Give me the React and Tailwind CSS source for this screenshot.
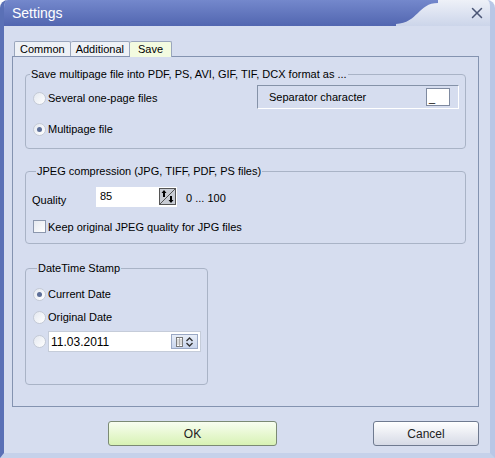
import { X } from "lucide-react";

const font = { fontFamily: '"Liberation Sans", Arial, sans-serif' };

function Radio({ checked }) {
  return (
    <span className="w-[13px] h-[13px] rounded-full border border-[#c4cad6] bg-gradient-to-br from-[#e4e8f0] to-[#ffffff] flex items-center justify-center shrink-0">
      {checked && <span className="w-[5px] h-[5px] rounded-full bg-[#5d6f99]" />}
    </span>
  );
}

function Group({ title, className, children }) {
  return (
    <fieldset className={"border border-[#a9b3c6] rounded-[4px] " + className}>
      <legend className="ml-[4px] px-[1px] text-[11px] leading-[14px] text-black">{title}</legend>
      {children}
    </fieldset>
  );
}

export default function App() {
  return (
    <div
      className="w-[495px] h-[458px] bg-[#d6ddef] rounded-t-[8px] overflow-hidden flex flex-col border-l-[4px] border-l-[#5a70b6] border-r-[5px] border-r-[#b9c7e6] border-b-[5px] border-b-[#c5d1ea] text-[11px] text-black"
      style={font}
    >
      {/* title bar */}
      <div className="h-[26px] flex shrink-0">
        <div className="flex-1 bg-gradient-to-b from-[#7488cc] to-[#5266b0] flex items-center pl-[8px]">
          <span className="text-white text-[14px]">Settings</span>
        </div>
        <svg width="42" height="26" viewBox="0 0 42 26" className="shrink-0">
          <defs>
            <linearGradient id="lt" x1="0" y1="0" x2="0" y2="1">
              <stop offset="0" stopColor="#eef1f8" />
              <stop offset="1" stopColor="#ccd5ea" />
            </linearGradient>
            <linearGradient id="dk" x1="0" y1="0" x2="0" y2="1">
              <stop offset="0" stopColor="#7488cc" />
              <stop offset="1" stopColor="#5266b0" />
            </linearGradient>
          </defs>
          <rect width="42" height="26" fill="url(#lt)" />
          <path d="M0 0 H42 V3 C22 3 22 23 0 24 V26 H0 Z" fill="url(#dk)" />
        </svg>
        <div className="w-[52px] bg-gradient-to-b from-[#eef1f8] to-[#ccd5ea] flex items-center justify-end pr-[4px]">
          <X size={18} strokeWidth={2} className="text-[#4a5575]" />
        </div>
      </div>

      {/* body */}
      <div className="flex-1 pl-[8px] pr-[11px] pt-[14px] flex flex-col">
        <div className="flex h-[16px] items-end pl-[2px]">
          <div className="h-[15px] px-[5px] border border-b-0 border-[#9aa6bc] bg-[#eef1f6] leading-[14px] rounded-t-[2px]">Common</div>
          <div className="h-[15px] px-[5px] border border-b-0 border-l-0 border-[#9aa6bc] bg-[#eef1f6] leading-[14px] rounded-t-[2px]">Additional</div>
          <div className="h-[16px] px-[8px] border border-b-0 border-l-0 border-[#9aa6bc] bg-[#f3fbe0] leading-[15px] rounded-t-[2px] -mb-px relative">Save</div>
        </div>

        <div className="h-[351px] border border-[#8493b0] px-[12px] pt-[10px] flex flex-col">
          <Group title="Save multipage file into PDF, PS, AVI, GIF, TIF, DCX format as ..." className="h-[82px] flex">
            <div className="flex-1 flex flex-col pl-[7px] pt-[10px] gap-[16px]">
              <div className="flex items-center gap-[2px] h-[15px]">
                <Radio />
                <span>Several one-page files</span>
              </div>
              <div className="flex items-center gap-[2px] h-[15px]">
                <Radio checked />
                <span>Multipage file</span>
              </div>
            </div>
            <div className="w-[202px] h-[24px] mr-[6px] mt-[4px] border border-[#8592a8] border-r-white border-b-white flex items-center justify-between pl-[11px] pr-[8px]">
              <span>Separator character</span>
              <div className="w-[24px] h-[18px] bg-white border border-[#7f8aa0] flex items-end pl-[2px] pb-[2px] leading-[10px]">_</div>
            </div>
          </Group>

          <Group title="JPEG compression (JPG, TIFF, PDF, PS files)" className="h-[80px] mt-[15px] flex flex-col pl-[6px]">
            <div className="flex items-center mt-[8px]">
              <span className="w-[64px] pt-[6px]">Quality</span>
              <div className="w-[81px] h-[20px] bg-white flex items-start justify-between pl-[4px] pr-[1px] pt-[1px]">
                <span>85</span>
                <svg width="17" height="17" viewBox="0 0 17 17">
                  <rect x="0.5" y="0.5" width="16" height="16" fill="#c8ccd4" stroke="#555" />
                  <path d="M1 16 L16 1" stroke="#555" />
                  <path d="M5 2 L2.5 5 H4 V9 H6 V5 H7.5 Z" fill="#000" />
                  <path d="M12 15 L9.5 12 H11 V8 H13 V12 H14.5 Z" fill="#000" />
                </svg>
              </div>
              <span className="ml-[9px] pt-[2px]">0 ... 100</span>
            </div>
            <div className="flex items-center mt-[10px] pl-[1px] gap-[2px]">
              <span className="w-[13px] h-[13px] border border-[#8c97ad] bg-gradient-to-br from-[#e6e9f0] to-white" />
              <span>Keep original JPEG quality for JPG files</span>
            </div>
          </Group>

          <Group title="DateTime Stamp" className="w-[183px] h-[124px] mt-[17px] flex flex-col pl-[7px] pt-[12px]">
            <div className="flex items-center gap-[2px] h-[15px]">
              <Radio checked />
              <span>Current Date</span>
            </div>
            <div className="flex items-center gap-[2px] h-[15px] mt-[8px]">
              <Radio />
              <span>Original Date</span>
            </div>
            <div className="flex items-center gap-[2px] mt-[6px]">
              <Radio />
              <div className="w-[153px] h-[21px] bg-white border border-[#c5ccd9] flex items-center justify-between pl-[2px] pr-[2px]">
                <span className="text-[12px]">11.03.2011</span>
                <div className="w-[27px] h-[15px] bg-gradient-to-b from-[#e8eef8] to-[#c9d5ec] border border-[#9aa8c4] flex items-center justify-center gap-[2px]">
                  <svg width="7" height="10" viewBox="0 0 7 10">
                    <rect x="0.5" y="0.5" width="6" height="9" fill="#fff" stroke="#777" />
                    <path d="M0.5 3 H6.5 M0.5 5 H6.5 M0.5 7 H6.5 M3.5 0.5 V9.5" stroke="#999" strokeWidth="0.7" />
                  </svg>
                  <svg width="9" height="10" viewBox="0 0 9 10">
                    <path d="M1.5 4 L4.5 1 L7.5 4 M1.5 6 L4.5 9 L7.5 6" stroke="#333" strokeWidth="1.4" fill="none" />
                  </svg>
                </div>
              </div>
            </div>
          </Group>
        </div>

        <div className="flex mt-[14px] pl-[96px] justify-between">
          <button className="w-[169px] h-[25px] rounded-[3px] border border-[#7b8a74] bg-gradient-to-b from-[#f8fef0] to-[#d8f2b4] text-[#222] text-[12px]">
            OK
          </button>
          <button className="w-[106px] h-[25px] rounded-[3px] border border-[#6f7a90] bg-gradient-to-b from-white to-[#d6dae6] text-[#222] text-[12px]">
            Cancel
          </button>
        </div>
      </div>
    </div>
  );
}
